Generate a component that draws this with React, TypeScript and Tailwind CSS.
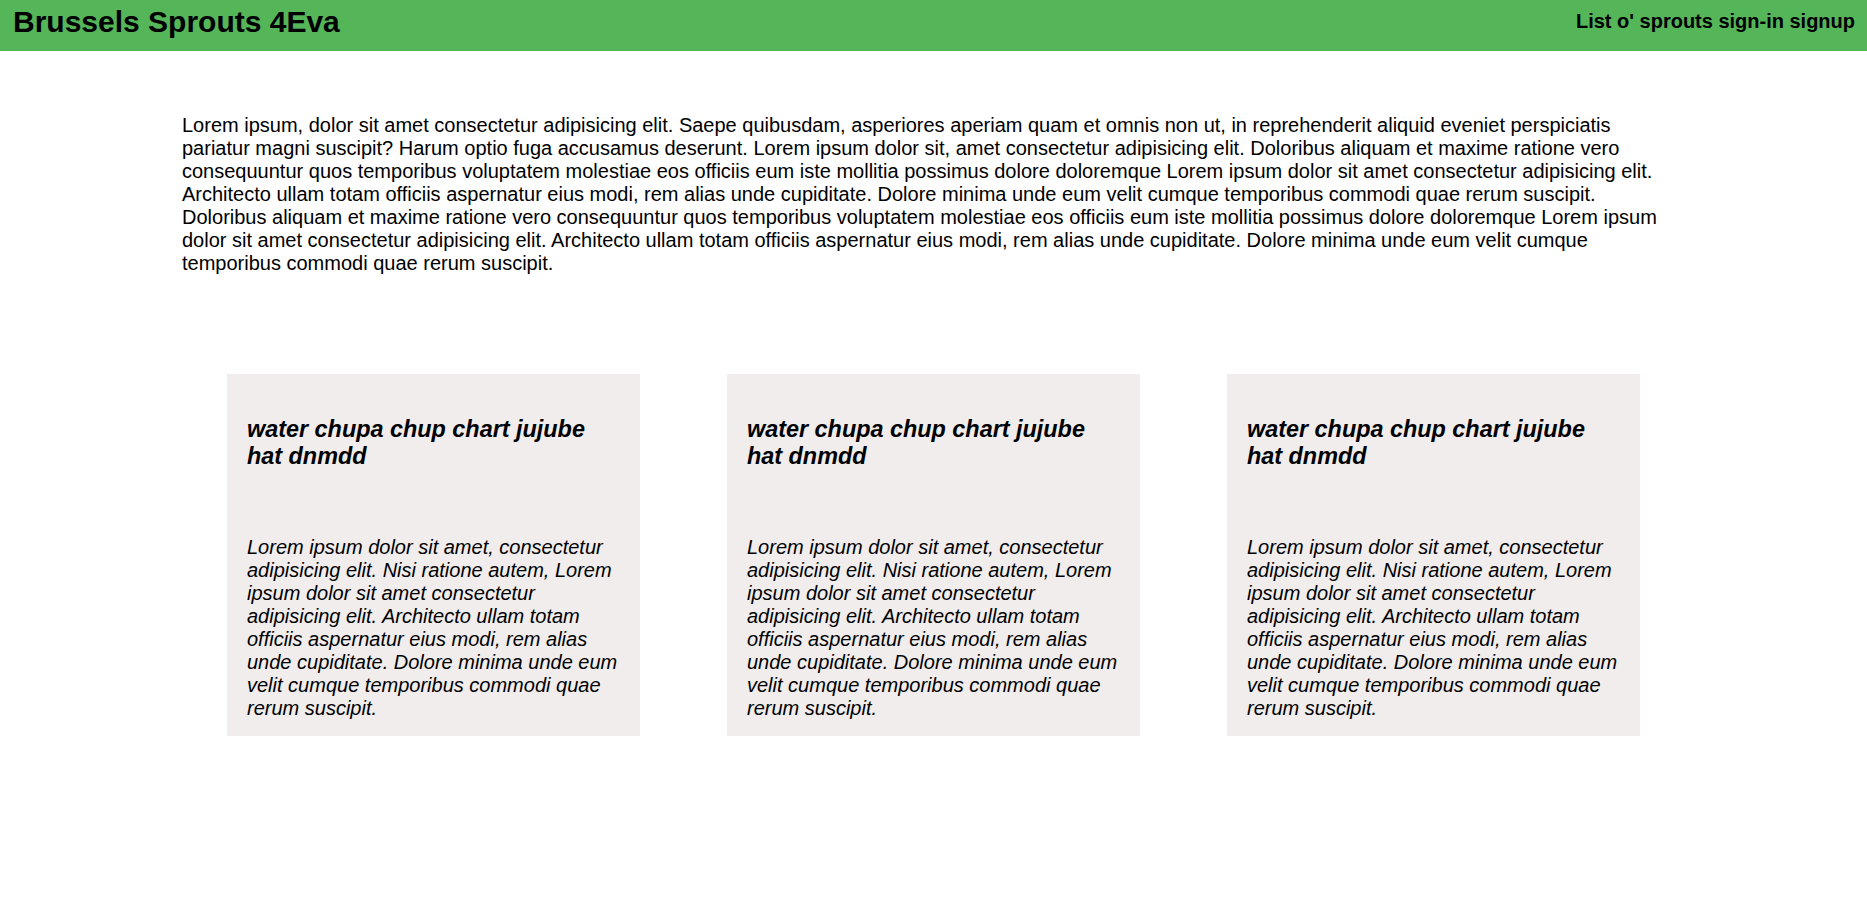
const intro =
  'Lorem ipsum, dolor sit amet consectetur adipisicing elit. Saepe quibusdam, asperiores aperiam quam et omnis non ut, in reprehenderit aliquid eveniet perspiciatis pariatur magni suscipit? Harum optio fuga accusamus deserunt. Lorem ipsum dolor sit, amet consectetur adipisicing elit. Doloribus aliquam et maxime ratione vero consequuntur quos temporibus voluptatem molestiae eos officiis eum iste mollitia possimus dolore doloremque Lorem ipsum dolor sit amet consectetur adipisicing elit. Architecto ullam totam officiis aspernatur eius modi, rem alias unde cupiditate. Dolore minima unde eum velit cumque temporibus commodi quae rerum suscipit. Doloribus aliquam et maxime ratione vero consequuntur quos temporibus voluptatem molestiae eos officiis eum iste mollitia possimus dolore doloremque Lorem ipsum dolor sit amet consectetur adipisicing elit. Architecto ullam totam officiis aspernatur eius modi, rem alias unde cupiditate. Dolore minima unde eum velit cumque temporibus commodi quae rerum suscipit.';

const cardText =
  'Lorem ipsum dolor sit amet, consectetur adipisicing elit. Nisi ratione autem, Lorem ipsum dolor sit amet consectetur adipisicing elit. Architecto ullam totam officiis aspernatur eius modi, rem alias unde cupiditate. Dolore minima unde eum velit cumque temporibus commodi quae rerum suscipit.';

function Card() {
  return (
    <div className="w-[413px] h-[362px] bg-[#f1eded] px-5 pt-[42px] italic">
      <h3 className="text-[23.4px] font-bold leading-[normal]">water chupa chup chart jujube hat dnmdd</h3>
      <p className="mt-[66px] text-[20px] leading-[normal]">{cardText}</p>
    </div>
  );
}

export default function App() {
  return (
    <div className="min-h-screen bg-white text-black text-[20px] leading-[normal] font-['Liberation_Sans',Arial,sans-serif]">
      <header className="flex h-[51px] items-start justify-between bg-[#55b559] pl-[13px] pr-[12px]">
        <h2 className="mt-[5px] text-[30px] font-bold">Brussels Sprouts 4Eva</h2>
        <nav className="mt-[10px] flex gap-[5.5px] text-[20px] font-bold">
          <a>List o' sprouts</a>
          <a>sign-in</a>
          <a>signup</a>
        </nav>
      </header>

      <p className="mt-[63px] pl-[182px] pr-[197px]">{intro}</p>

      <div className="mt-[99px] flex justify-center gap-[87px]">
        <Card />
        <Card />
        <Card />
      </div>
    </div>
  );
}
